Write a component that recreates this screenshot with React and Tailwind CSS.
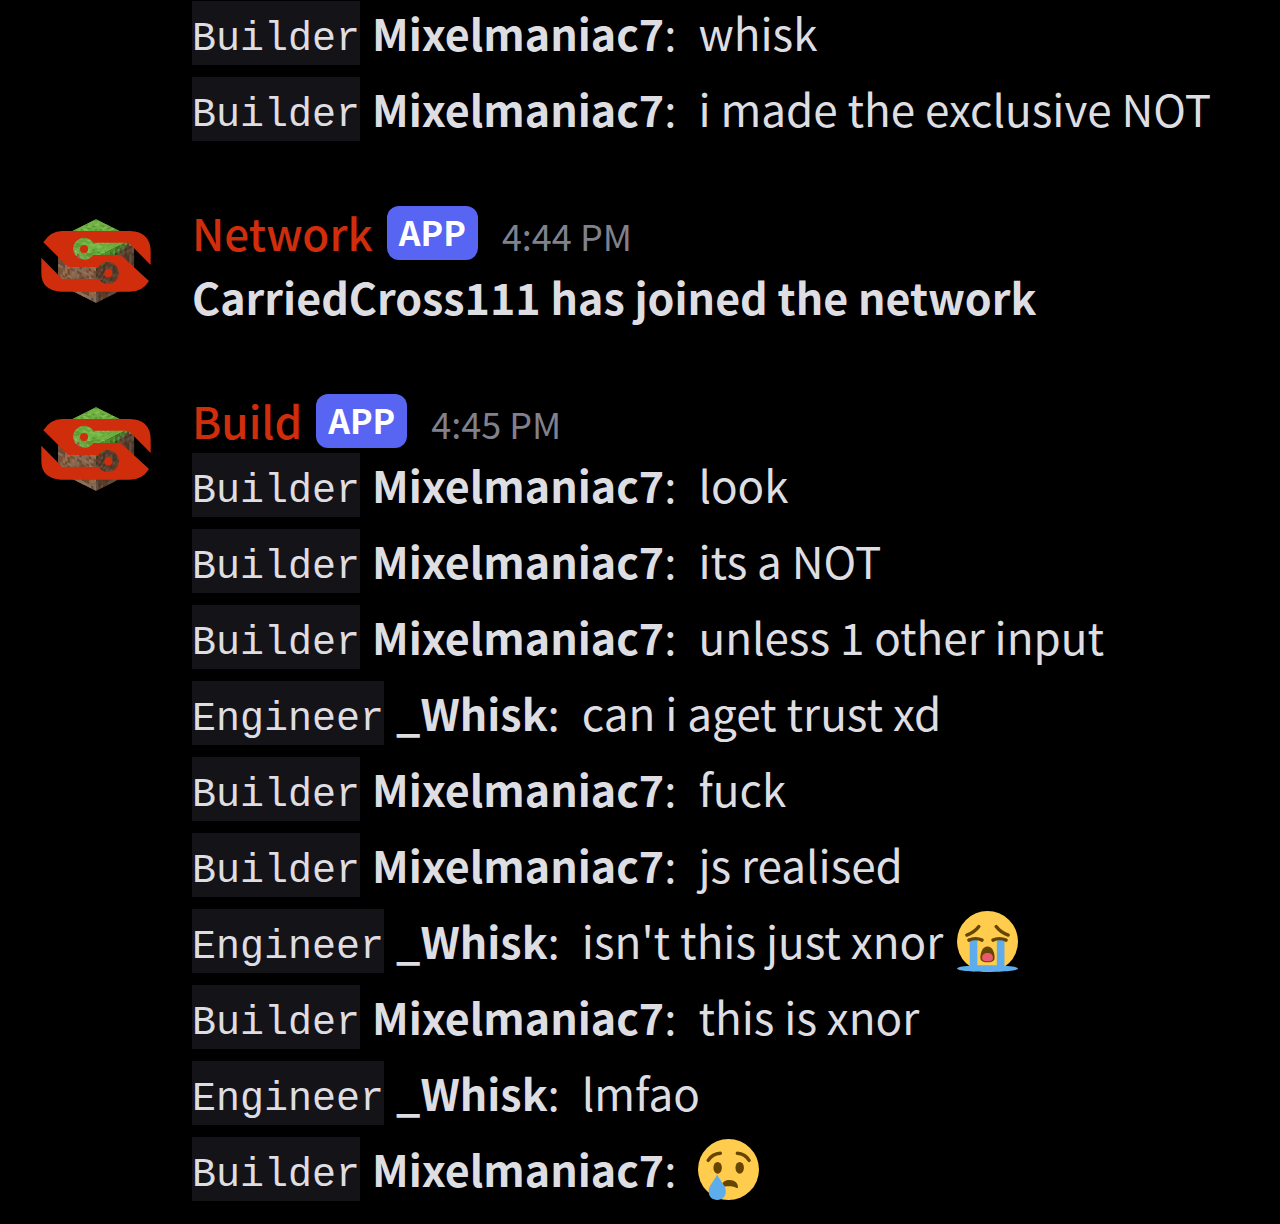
const RED = "#cf2d0c";

const GRASS = ["#69a83c", "#74b648", "#5c9a33", "#6fb044", "#80c253"];
const DIRT_LIGHT = ["#8a6246", "#755139", "#9b7153", "#6a4932", "#82705f"];
const DIRT_DARK = ["#5a3f2c", "#4a3324", "#694a34", "#553b2a", "#5f5045"];
const GRASS_DARK = ["#4c8a2b", "#5a9e35", "#3f7422", "#52922f"];

const cells = Array.from({ length: 256 }, (_, i) => ({ x: i % 16, y: Math.floor(i / 16) }));

const pick = (colors, x, y, seed) => {
  const n = Math.abs(Math.sin(x * 12.9898 + y * 78.233 + seed) * 43758.5453);
  return colors[Math.floor((n % 1) * colors.length)];
};

const grassDepth = [3, 4, 3, 2, 3, 2, 2, 3, 2, 3, 4, 3, 4, 2, 3, 3];
const grassDepthDark = [4, 3, 4, 3, 2, 4, 2, 4, 2, 3, 1, 2, 1, 1, 2, 1];

function Face({ transform, top, side, depth, seed }) {
  return (
    <g transform={transform}>
      <rect width="16" height="16" fill={side[0]} />
      {cells.map(({ x, y }) => (
        <rect
          key={`${x}-${y}`}
          x={x}
          y={y}
          width="1.05"
          height="1.05"
          fill={pick(y < depth[x] ? top : side, x, y, seed)}
        />
      ))}
    </g>
  );
}

function ServerLogo() {
  return (
    <svg viewBox="18 -12 360 360" className="size-[120px] shrink-0" role="img" aria-label="Server avatar">
      <Face transform="matrix(7.125 3.56 -7.125 3.56 198 43)" top={GRASS} side={GRASS} depth={grassDepth} seed={1} />
      <Face transform="matrix(7.125 3.56 0 8.5 84 100)" top={GRASS} side={DIRT_LIGHT} depth={grassDepth} seed={2} />
      <Face transform="matrix(7.125 -3.56 0 8.5 198 157)" top={GRASS_DARK} side={DIRT_DARK} depth={grassDepthDark} seed={3} />
      <path
        fill={RED}
        d="M40 112Q62 78 96 78H300Q362 80 362 140V180L296 113H190A33 33 0 1 0 190 150H272L357 228Q338 260 300 260H92Q34 256 34 204V158L97 222H206A33 33 0 1 0 206 186H115Z"
      />
      <circle cx="162" cy="132" r="12" fill={RED} />
      <circle cx="235" cy="205" r="12" fill={RED} />
    </svg>
  );
}

function SobEmoji() {
  return (
    <svg viewBox="0 0 36 36" className="size-[61px] shrink-0" role="img" aria-label="Loudly crying face">
      <circle cx="18" cy="18" r="18" fill="#ffcc4d" />
      <path fill="#5dadec" d="M7.5 17H12V32H23.5V17H28V32.3C33 32.6 36 33.2 36 34C36 35.2 28 36 18 36S0 35.2 0 34C0 33.2 3 32.6 7.5 32.3Z" />
      <path fill="none" stroke="#664500" strokeWidth="2" strokeLinecap="round" d="M5.8 14.2Q10.4 12.6 12.9 9.2M30.2 14.2Q25.6 12.6 23.1 9.2M7 17.2Q11 15.4 14.8 17.2M29 17.2Q25 15.4 21.2 17.2" />
      <path fill="#664500" d="M18 21C15.2 21 13.8 24.4 13.8 27.5C13.8 29.3 14.7 30.3 18 30.3S22.2 29.3 22.2 27.5C22.2 24.4 20.8 21 18 21Z" />
      <path fill="#e75a70" d="M18 24.8C16 24.8 14.8 26 14.8 27.6C14.8 29.2 16 29.7 18 29.7S21.2 29.2 21.2 27.6C21.2 26 20 24.8 18 24.8Z" />
    </svg>
  );
}

function CryEmoji() {
  return (
    <svg viewBox="0 0 36 36" className="size-[61px] shrink-0" role="img" aria-label="Crying face">
      <circle cx="18" cy="18" r="18" fill="#ffcc4d" />
      <ellipse cx="11.6" cy="17" rx="2.5" ry="3.5" fill="#664500" />
      <ellipse cx="24.6" cy="17" rx="2.5" ry="3.5" fill="#664500" />
      <path fill="none" stroke="#664500" strokeWidth="2" strokeLinecap="round" d="M6 12.6Q8.5 8.6 13.2 8.4M30.2 12.6Q27.7 8.6 23.2 8.4" />
      <path fill="#664500" d="M14 27.4C14.6 25.2 16.2 24.2 18.6 24.2C21.6 24.2 23.6 26 23.6 28.4C23.6 29.1 23.1 29.1 22.4 28.7C21 28 19 27.6 15 28.2Z" />
      <path fill="#5dadec" d="M16.4 31C16.4 34 14.4 36 11.4 36S6.3 34 6.3 31C6.3 27.5 9 25.6 11.3 21C13.6 25.6 16.4 27.5 16.4 31Z" />
    </svg>
  );
}

const messages = [
  {
    id: 1,
    lines: [
      { role: "Builder", user: "Mixelmaniac7", text: "whisk" },
      { role: "Builder", user: "Mixelmaniac7", text: "i made the exclusive NOT" },
    ],
  },
  {
    id: 2,
    author: "Network",
    time: "4:44 PM",
    notice: "CarriedCross111 has joined the network",
  },
  {
    id: 3,
    author: "Build",
    time: "4:45 PM",
    lines: [
      { role: "Builder", user: "Mixelmaniac7", text: "look" },
      { role: "Builder", user: "Mixelmaniac7", text: "its a NOT" },
      { role: "Builder", user: "Mixelmaniac7", text: "unless 1 other input" },
      { role: "Engineer", user: "_Whisk", text: "can i aget trust xd" },
      { role: "Builder", user: "Mixelmaniac7", text: "fuck" },
      { role: "Builder", user: "Mixelmaniac7", text: "js realised" },
      { role: "Engineer", user: "_Whisk", text: "isn't this just xnor", emoji: <SobEmoji /> },
      { role: "Builder", user: "Mixelmaniac7", text: "this is xnor" },
      { role: "Engineer", user: "_Whisk", text: "lmfao" },
      { role: "Builder", user: "Mixelmaniac7", emoji: <CryEmoji /> },
    ],
  },
];

function ChatLine({ role, user, text, emoji }) {
  return (
    <li className="flex h-16 items-center whitespace-nowrap">
      <code className="mr-3 bg-[#141318] pt-3.5 font-['Liberation_Mono',monospace] text-[40px] leading-[50px]">
        {role}
      </code>
      <span className="mr-5.5 pb-0.5">
        <strong className="text-[43px] font-bold">{user}</strong>:
      </span>
      {text && <span className="mr-3.5 pb-0.5">{text}</span>}
      {emoji}
    </li>
  );
}

function Message({ author, time, notice, lines }) {
  return (
    <article className="flex gap-9">
      <div className="w-[120px] shrink-0">{author && <ServerLogo />}</div>
      <div className="min-w-0 flex-1">
        {author && (
          <header className="flex h-16 items-center whitespace-nowrap">
            <h2 className="mr-3.5 pb-0.5 font-medium text-[#cf2d0c]">{author}</h2>
            <span className="mr-6 rounded-xl bg-[#5865f2] px-3 pb-0.5 text-[34px] leading-[52px] font-bold text-white">
              APP
            </span>
            <time className="pt-1 text-[36px] text-[#80818d]">{time}</time>
          </header>
        )}
        {notice && <p className="pb-0.5 text-[43px] leading-[62px] font-bold whitespace-nowrap">{notice}</p>}
        {lines && (
          <ul className="flex flex-col gap-3">
            {lines.map((line, i) => (
              <ChatLine key={i} {...line} />
            ))}
          </ul>
        )}
      </div>
    </article>
  );
}

export default function App() {
  return (
    <main className="flex min-h-screen flex-col gap-[60px] overflow-hidden bg-black px-9 pt-px pb-[23px] font-['Noto_Sans_CJK_SC',sans-serif] text-[44px] leading-16 text-[#dddde2]">
      {messages.map((message) => (
        <Message key={message.id} {...message} />
      ))}
    </main>
  );
}
